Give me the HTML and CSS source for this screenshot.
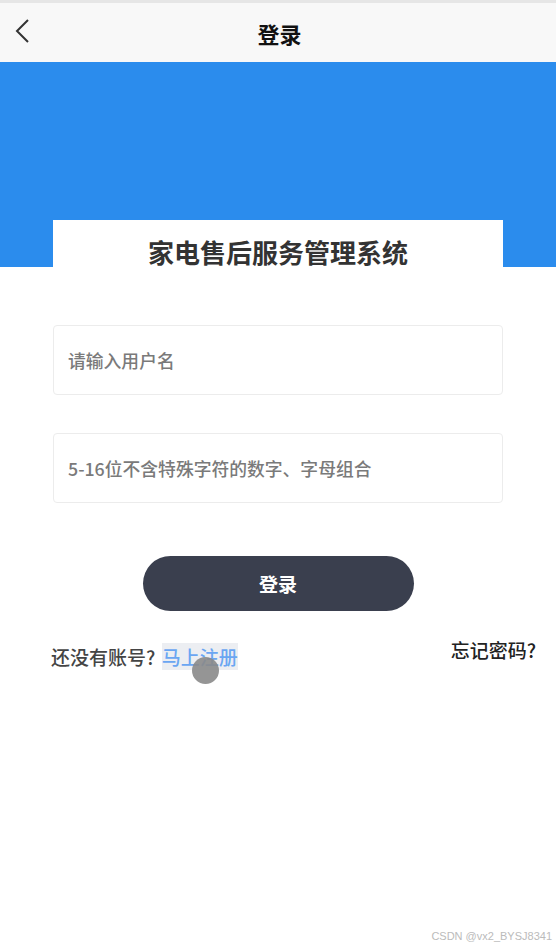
FILE: index.html
```html
<!DOCTYPE html>
<html>
  <head>
    <meta charset="utf-8">
    <link rel="stylesheet" href="styles.css">
  </head>
  <body>
    <div class="page">
      <div class="top-line"></div>
      <header class="header">
        <button class="back">
          <svg viewBox="0 0 16 26" width="16" height="26" fill="none" stroke="#333" stroke-width="2">
            <polyline points="14 2 3 13 14 24"></polyline>
          </svg>
        </button>
        <h1 class="header-title">登录</h1>
      </header>

      <div class="banner">
        <div class="card">
          <h2 class="card-title">家电售后服务管理系统</h2>
        </div>
      </div>

      <form class="form">
        <div class="field">
          <input type="text" class="field-input" placeholder="请输入用户名">
        </div>
        <div class="field">
          <input type="password" class="field-input" placeholder="5-16位不含特殊字符的数字、字母组合">
        </div>
        <button type="button" class="login-btn">登录</button>
        <div class="links">
          <div class="register">
            还没有账号? <span class="register-link">马上注册</span>
            <span class="touch-dot"></span>
          </div>
          <div class="forgot">忘记密码?</div>
        </div>
      </form>

      <div class="watermark">CSDN @vx2_BYSJ8341</div>
    </div>
  </body>
</html>
```

FILE: styles.css
```css
* {
  margin: 0;
  padding: 0;
  box-sizing: border-box;
}

body {
  width: 556px;
  height: 946px;
  background: #fff;
  font-family: "Noto Sans CJK SC", "Noto Sans", sans-serif;
  overflow: hidden;
}

.page {
  position: relative;
  height: 946px;
}

.top-line {
  height: 3px;
  background: #e6e6e6;
}

.header {
  position: relative;
  height: 59px;
  background: #f8f8f8;
  display: flex;
  align-items: center;
  justify-content: center;
}

.back {
  position: absolute;
  left: 14px;
  top: 15px;
  border: none;
  background: none;
}

.header-title {
  font-size: 22px;
  font-weight: 700;
  color: #111;
  margin-top: 1px;
  margin-left: 3px;
}

.banner {
  height: 205px;
  background: #2b8ced;
  display: flex;
  align-items: flex-end;
  justify-content: center;
}

.card {
  width: 450px;
  height: 47px;
  background: #fff;
  display: flex;
  justify-content: center;
  padding-top: 14px;
}

.card-title {
  font-size: 26px;
  font-weight: 700;
  color: #333;
  line-height: 36px;
}

.form {
  padding: 58px 53px 0;
  display: flex;
  flex-direction: column;
}

.field {
  height: 70px;
  border: 1px solid #ececec;
  border-radius: 4px;
  margin-bottom: 38px;
  display: flex;
  align-items: center;
}

.field-input {
  width: 100%;
  border: none;
  outline: none;
  background: transparent;
  padding: 0 14px;
  font-family: inherit;
  font-size: 17.8px;
  font-weight: 500;
  color: #333;
}

.field-input::placeholder {
  color: #7a7a7a;
}

.login-btn {
  align-self: center;
  width: 271px;
  height: 55px;
  margin-top: 15px;
  border: none;
  border-radius: 28px;
  background: #3a3f4e;
  color: #fff;
  font-family: inherit;
  font-size: 19px;
  font-weight: 700;
}

.links {
  display: flex;
  justify-content: space-between;
  margin: 25px -33px 0 -2px;
}

.register {
  position: relative;
  font-size: 19px;
  font-weight: 500;
  color: #444;
  margin-top: 7px;
}

.register-link {
  color: #6aa6f2;
  background: #eceef2;
  margin-left: 2px;
}

.touch-dot {
  position: absolute;
  left: 141px;
  top: 14px;
  width: 27px;
  height: 27px;
  border-radius: 50%;
  background: #8a8a8a;
  opacity: 0.9;
}

.forgot {
  font-size: 19px;
  font-weight: 500;
  color: #222;
}

.watermark {
  position: absolute;
  right: 4px;
  bottom: 4px;
  font-family: "Liberation Sans", sans-serif;
  font-size: 11px;
  color: #bbb;
}
```
